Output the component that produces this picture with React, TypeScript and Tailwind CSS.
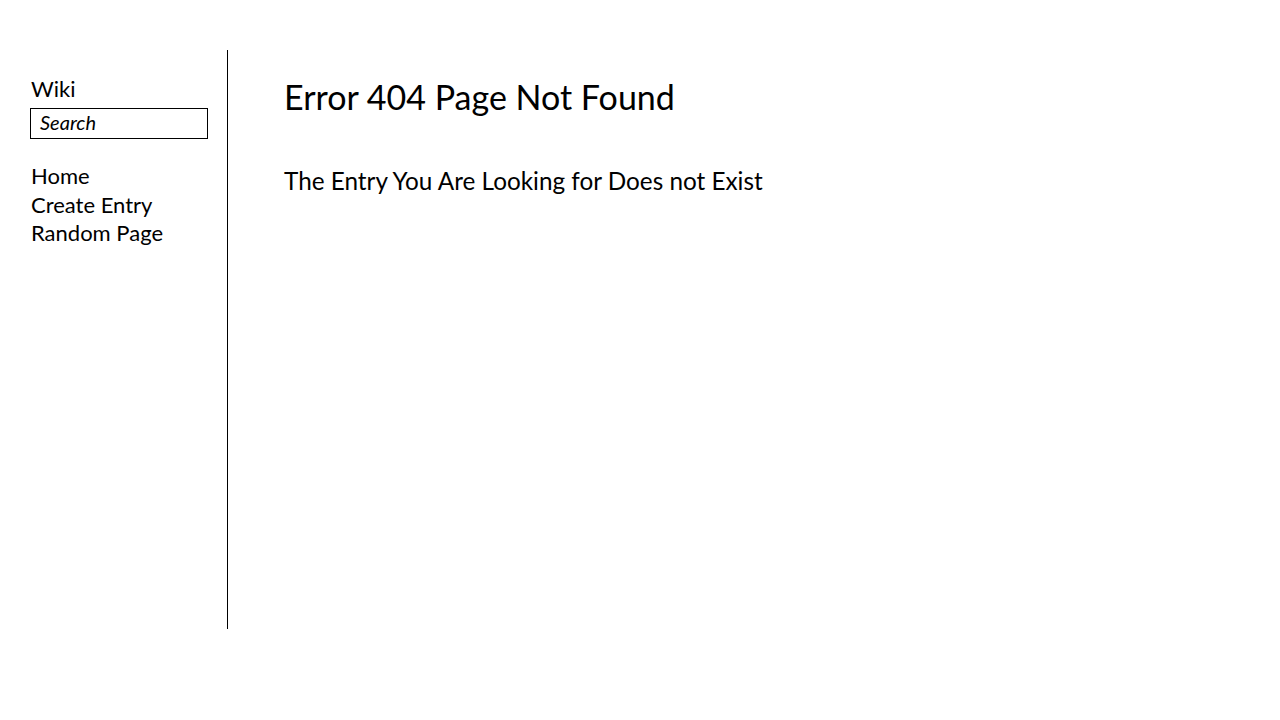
import React from "react";

const App = () => {
  return (
    <div className="w-[1280px] h-[720px] bg-white text-black font-['Lato','Liberation_Sans',sans-serif]">
      <div className="flex pt-[50px]">
        <aside className="w-[228px] h-[579px] border-r border-black pl-[30px] pt-[25px] shrink-0">
          <h2 className="text-[22px] leading-[28px] pl-[1px]">Wiki</h2>
          <div className="mt-[5px] w-[178px] h-[31px] border border-black flex items-center pl-[9px] pb-[3px]">
            <span className="italic text-[20px] leading-none">Search</span>
          </div>
          <nav className="mt-[23px] pl-[1px] flex flex-col text-[22px] leading-[28.5px]">
            <a href="#">Home</a>
            <a href="#">Create Entry</a>
            <a href="#">Random Page</a>
          </nav>
        </aside>
        <main className="pl-[56px] pt-[25px]">
          <h1 className="text-[34px] leading-[44px]">Error 404 Page Not Found</h1>
          <p className="mt-[47px] text-[24.3px] leading-[30px]">
            The Entry You Are Looking for Does not Exist
          </p>
        </main>
      </div>
    </div>
  );
};

export default App;
